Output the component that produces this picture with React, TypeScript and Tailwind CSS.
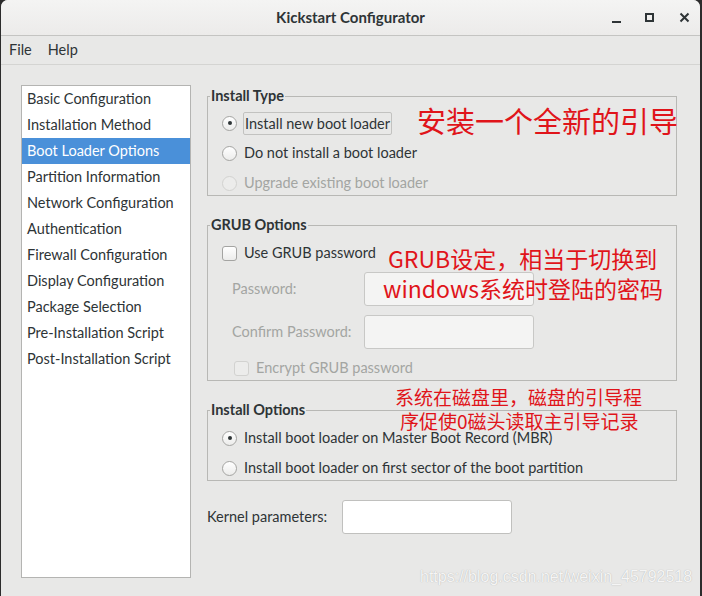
const sidebarItems = [
  'Basic Configuration',
  'Installation Method',
  'Boot Loader Options',
  'Partition Information',
  'Network Configuration',
  'Authentication',
  'Firewall Configuration',
  'Display Configuration',
  'Package Selection',
  'Pre-Installation Script',
  'Post-Installation Script',
];

function Radio({ checked, disabled }: { checked?: boolean; disabled?: boolean }) {
  return (
    <span
      className={`flex items-center justify-center w-[15px] h-[15px] rounded-full border shrink-0 ${
        disabled
          ? 'border-[#d2d2d0] bg-[#ececeb]'
          : 'border-[#a4a4a2] bg-gradient-to-b from-[#ffffff] to-[#ececeb]'
      }`}
    >
      {checked && <span className="w-[4px] h-[4px] rounded-full bg-[#2e3436]" />}
    </span>
  );
}

function Check({ disabled }: { disabled?: boolean }) {
  return (
    <span
      className={`w-[15px] h-[15px] rounded-[3px] border shrink-0 ${
        disabled
          ? 'border-[#d2d2d0] bg-[#ececeb]'
          : 'border-[#a4a4a2] bg-gradient-to-b from-[#ffffff] to-[#ececeb]'
      }`}
    />
  );
}

function Frame({ title, children }: { title: string; children: React.ReactNode }) {
  return (
    <fieldset className="m-0 border border-[#b8b8b5] pl-[2px] pr-0 pb-0 pt-0">
      <legend className="px-[1px] text-[14.5px] leading-[20px] font-bold text-[#2e3436]">{title}</legend>
      <div className="pl-[12px]">{children}</div>
    </fieldset>
  );
}

export default function App() {
  return (
    <div className="relative w-[702px] h-[596px] bg-[#2c2c2c] pl-px pr-[2px] overflow-hidden font-['Lato','Noto_Sans',sans-serif] text-[14.5px] text-[#2e3436]">
      <div className="h-full flex flex-col bg-[#e8e8e7] rounded-t-[7px] overflow-hidden">
        {/* title bar */}
        <div className="h-[36px] shrink-0 grid grid-cols-[1fr_auto_1fr] items-center bg-gradient-to-b from-[#f4f4f3] to-[#ecebea] border-b border-[#c4c4c2]">
          <div />
          <div className="text-[15px] font-bold text-[#2e3436]">Kickstart Configurator</div>
          <div className="flex justify-end items-center pr-[10px]">
            <span className="w-[9px] h-[2px] bg-[#2e3436] mt-[9px]" />
            <span className="ml-[24px] w-[9px] h-[9px] border-2 border-[#2e3436]" />
            <svg className="ml-[25px]" width="11" height="11" viewBox="0 0 11 11">
              <path d="M1.5 1.5 L9.5 9.5 M9.5 1.5 L1.5 9.5" stroke="#2e3436" strokeWidth="2" />
            </svg>
          </div>
        </div>

        {/* menu bar */}
        <div className="h-[29px] shrink-0 flex items-center gap-[16px] pl-[8px] border-b border-[#d4d4d2]">
          <span>File</span>
          <span>Help</span>
        </div>

        {/* body */}
        <div className="flex-1 flex pl-[20px] pt-[20px] pb-[18px]">
          <div className="w-[170px] bg-white border border-[#b4b4b2] flex flex-col">
            {sidebarItems.map(item => (
              <div
                key={item}
                className={`h-[26px] leading-[26px] pl-[5px] ${
                  item === 'Boot Loader Options' ? 'bg-[#4a90d9] text-white' : ''
                }`}
              >
                {item}
              </div>
            ))}
          </div>

          <div className="ml-[16px] w-[470px] pt-px flex flex-col gap-[19px]">
            <Frame title="Install Type">
              <div className="pt-[5px] flex flex-col gap-[6px]">
                <div className="h-[24px] flex items-center gap-[7px]">
                  <Radio checked />
                  <span className="border border-[#c2c2c0] rounded-[2px] px-[1px] leading-[21px] -ml-[1px]">
                    Install new boot loader
                  </span>
                </div>
                <div className="h-[24px] flex items-center gap-[7px]">
                  <Radio />
                  <span>Do not install a boot loader</span>
                </div>
                <div className="h-[24px] flex items-center gap-[7px] text-[#a3a5a2]">
                  <Radio disabled />
                  <span>Upgrade existing boot loader</span>
                </div>
              </div>
            </Frame>

            <Frame title="GRUB Options">
              <div className="pt-[6px] flex flex-col">
                <div className="h-[24px] flex items-center gap-[7px]">
                  <Check />
                  <span>Use GRUB password</span>
                </div>
                <div className="mt-[7px] h-[34px] flex items-center pl-[10px] text-[#a3a5a2]">
                  <span className="w-[132px]">Password:</span>
                  <span className="w-[170px] h-[34px] rounded-[3px] border border-[#c8c8c6] bg-[#f4f4f3]" />
                </div>
                <div className="mt-[9px] h-[34px] flex items-center pl-[10px] text-[#a3a5a2]">
                  <span className="w-[132px]">Confirm Password:</span>
                  <span className="w-[170px] h-[34px] rounded-[3px] border border-[#c8c8c6] bg-[#f4f4f3]" />
                </div>
                <div className="mt-[7px] h-[24px] flex items-center gap-[7px] pl-[12px] text-[#a3a5a2]">
                  <Check disabled />
                  <span>Encrypt GRUB password</span>
                </div>
              </div>
            </Frame>

            <Frame title="Install Options">
              <div className="pt-[6px] flex flex-col gap-[6px]">
                <div className="h-[24px] flex items-center gap-[7px]">
                  <Radio checked />
                  <span>Install boot loader on Master Boot Record (MBR)</span>
                </div>
                <div className="h-[24px] flex items-center gap-[7px]">
                  <Radio />
                  <span>Install boot loader on first sector of the boot partition</span>
                </div>
              </div>
            </Frame>

            <div className="h-[34px] flex items-center">
              <span className="w-[135px]">Kernel parameters:</span>
              <span className="w-[170px] h-[34px] rounded-[3px] border border-[#c0c0be] bg-white" />
            </div>
          </div>
        </div>
      </div>

      {/* red annotations drawn over the dialog */}
      <div className="absolute left-[417px] top-[106px] text-[29px] leading-none text-[#e0141a] font-['Noto_Sans_CJK_SC',sans-serif] whitespace-nowrap">
        安装一个全新的引导
      </div>
      <div className="absolute left-[388px] top-[247px] text-[23px] leading-none text-[#e0141a] font-['Noto_Sans_CJK_SC',sans-serif] whitespace-nowrap">
        GRUB设定，相当于切换到
      </div>
      <div className="absolute left-[383px] top-[277px] text-[23px] leading-none text-[#e0141a] font-['Noto_Sans_CJK_SC',sans-serif] whitespace-nowrap">
        windows系统时登陆的密码
      </div>
      <div className="absolute left-[395px] top-[387px] text-[19px] leading-none text-[#e0141a] font-['Noto_Sans_CJK_SC',sans-serif] whitespace-nowrap">
        系统在磁盘里，磁盘的引导程
      </div>
      <div className="absolute left-[400px] top-[411px] text-[19px] leading-none text-[#e0141a] font-['Noto_Sans_CJK_SC',sans-serif] whitespace-nowrap">
        序促使0磁头读取主引导记录
      </div>

      {/* watermark */}
      <div className="absolute left-[420px] top-[568px] text-[16px] leading-[18px] text-[#f5f5f5] font-['Liberation_Sans',sans-serif] [text-shadow:0_0_1px_#a8a8a8] whitespace-nowrap">
        https://blog.csdn.net/weixin_45792518
      </div>
    </div>
  );
}
